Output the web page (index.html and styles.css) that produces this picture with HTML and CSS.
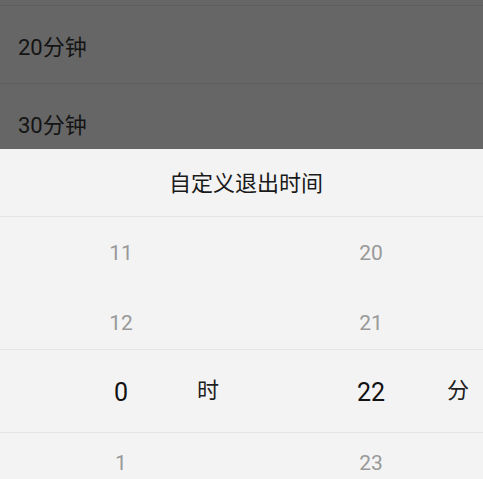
FILE: index.html
```html
<!DOCTYPE html>
<html lang="zh">
<head>
<meta charset="utf-8">
<title>自定义退出时间</title>
<link rel="stylesheet" href="styles.css">
</head>
<body>
<div class="screen">
  <div class="backdrop">
    <ul class="options">
      <li class="option option-hidden" aria-hidden="true"></li>
      <li class="option">20分钟</li>
      <li class="option">30分钟</li>
    </ul>
  </div>
  <div class="dialog">
    <div class="dialog-title">自定义退出时间</div>
    <div class="picker">
      <div class="wheel">
        <div class="item">11</div>
        <div class="item">12</div>
        <div class="item selected">0<span class="unit">时</span></div>
        <div class="item">1</div>
      </div>
      <div class="wheel">
        <div class="item">20</div>
        <div class="item">21</div>
        <div class="item selected">22<span class="unit">分</span></div>
        <div class="item">23</div>
      </div>
      <div class="band"></div>
    </div>
  </div>
</div>
</body>
</html>
```
FILE: styles.css
```css
html, body {
  margin: 0;
  padding: 0;
}
body {
  width: 483px;
  height: 479px;
  overflow: hidden;
  font-family: Roboto, "Noto Sans CJK SC", sans-serif;
  background: #f3f3f3;
}
.screen {
  width: 483px;
  height: 479px;
  overflow: hidden;
  display: flex;
  flex-direction: column;
}
.backdrop {
  height: 149px;
  flex: none;
  background: #666666;
  overflow: hidden;
}
.options {
  list-style: none;
  margin: -72px 0 0 0;
  padding: 0;
}
.option {
  height: 77px;
  border-bottom: 1px solid #5e5e5e;
  display: flex;
  align-items: center;
  padding-left: 18px;
  font-size: 22px;
  color: #141414;
}
.dialog {
  flex: 1;
  background: #f3f3f3;
  display: flex;
  flex-direction: column;
}
.dialog-title {
  flex: none;
  box-sizing: border-box;
  height: 68px;
  border-bottom: 1px solid #e6e6e6;
  display: flex;
  align-items: center;
  justify-content: center;
  font-size: 22px;
  color: #1a1a1a;
  padding: 0 0 3px 9px;
}
.picker {
  position: relative;
  display: grid;
  grid-template-columns: 242px 242px;
  column-gap: 8px;
  padding-top: 1px;
}
.wheel {
  display: flex;
  flex-direction: column;
}
.item {
  position: relative;
  height: 70px;
  display: flex;
  align-items: center;
  justify-content: center;
  font-size: 21px;
  color: #999999;
}
.item.selected {
  font-size: 25px;
  color: #111111;
  padding-bottom: 2px;
  box-sizing: border-box;
}
.unit {
  position: absolute;
  left: calc(50% + 76px);
  top: 18px;
  font-size: 22px;
  line-height: 30px;
  color: #1e1e1e;
}
.band {
  position: absolute;
  left: 0;
  right: 0;
  top: 132px;
  height: 82px;
  border-top: 1px solid #e6e6e6;
  border-bottom: 1px solid #e6e6e6;
  pointer-events: none;
}
```
